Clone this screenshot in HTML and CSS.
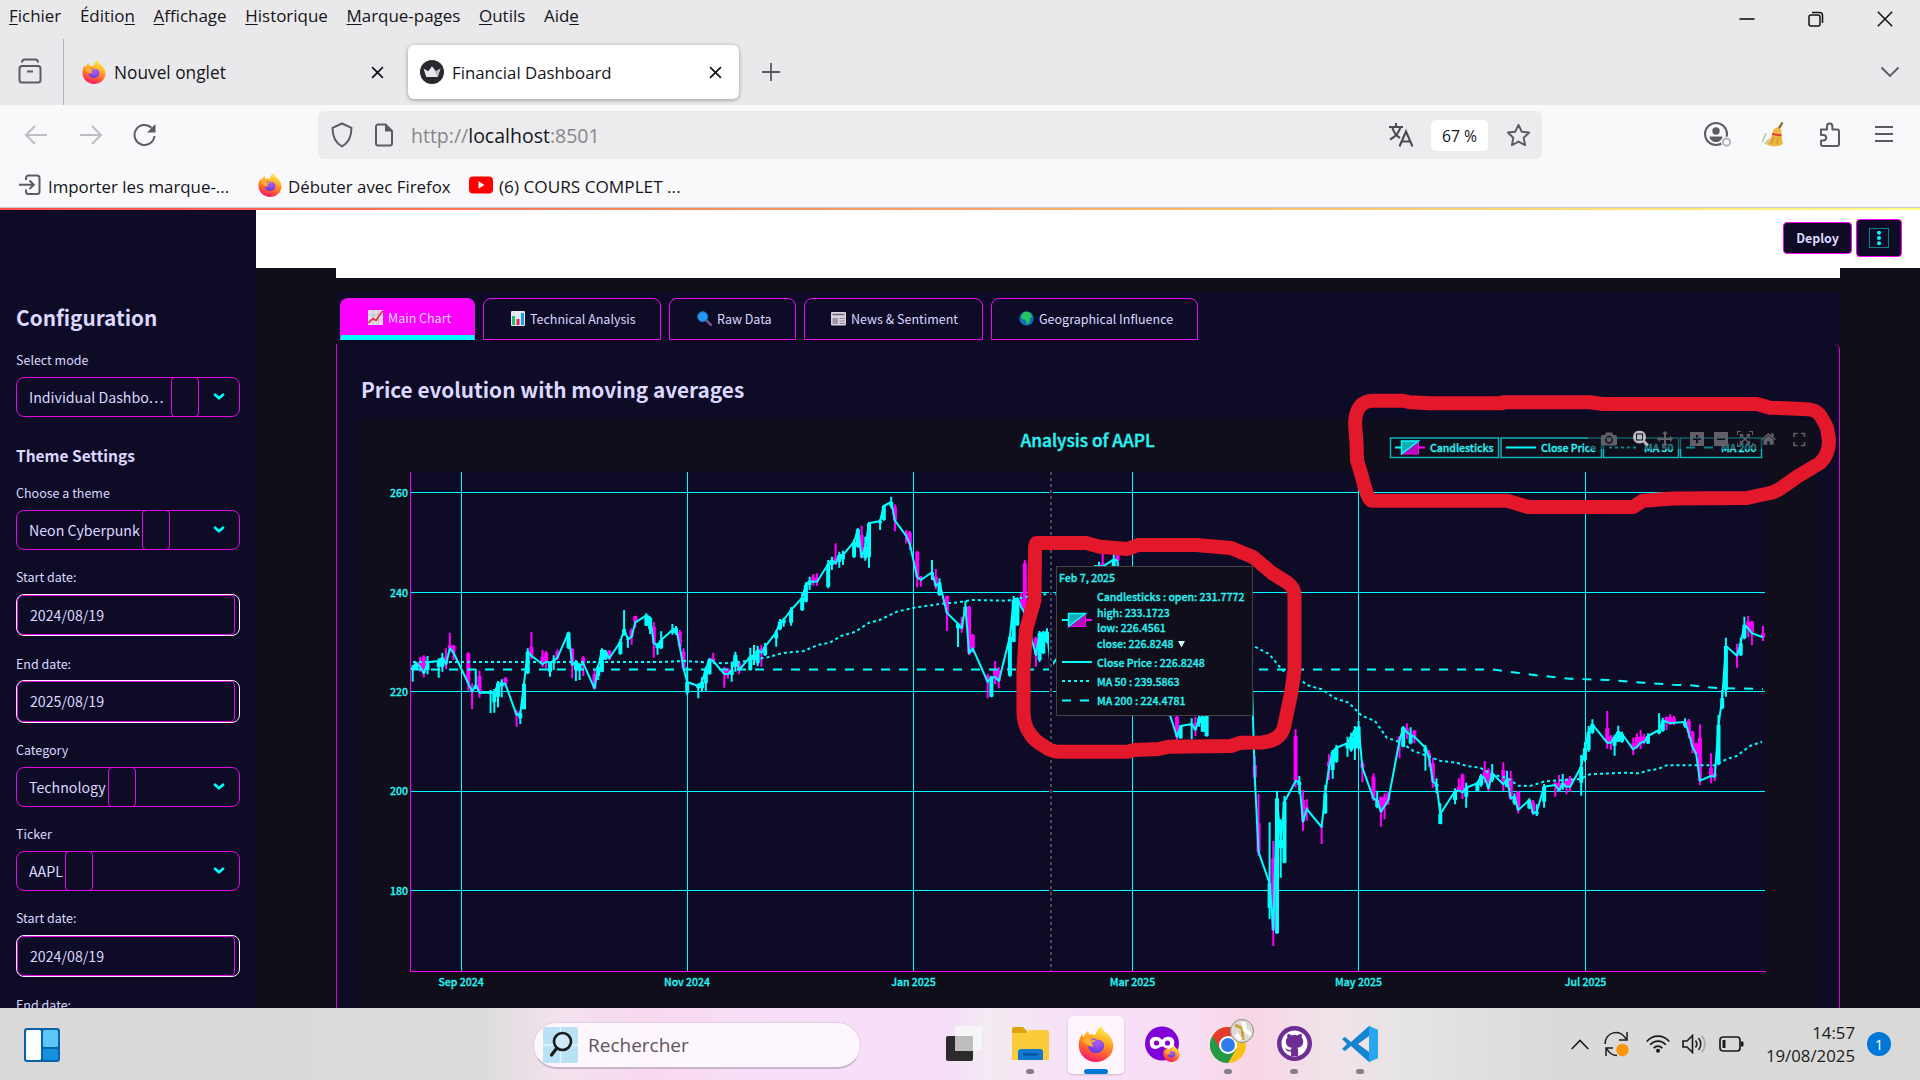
FILE: index.html
```html
<!DOCTYPE html>
<html lang="fr">
<head>
<meta charset="utf-8">
<title>Financial Dashboard</title>
<link rel="stylesheet" href="styles.css">
</head>
<body>
<svg class="defs" width="0" height="0">
  <defs>
    <linearGradient id="ffBody" x1=".7" y1="0" x2=".35" y2="1"><stop offset="0" stop-color="#fff44f"/><stop offset=".35" stop-color="#ffb42a"/><stop offset=".65" stop-color="#ff6a2c"/><stop offset="1" stop-color="#f5156c"/></linearGradient>
    <radialGradient id="ffCore" cx=".6" cy=".3" r=".8"><stop offset="0" stop-color="#b05cff"/><stop offset="1" stop-color="#5a35d8"/></radialGradient>
    <symbol id="firefox" viewBox="0 0 24 24">
      <path fill="url(#ffBody)" d="M15.6 0c.4 2.2 2 3.4 3.6 4.9 2.4 2.2 4.3 4.8 4.3 8.3C23.500 19.400 18.400 24 12 24S.5 19.200.5 12.800c0-3 .9-5.700 2.400-7.800.1 1.100.4 1.900.9 2.500C4.300 5.600 5.400 4 6.800 3.100c0 1 .3 1.900.8 2.600 1.600-.4 2.900-.2 4 .3C12.200 3.400 13.500 1.300 15.600 0z"/>
      <path fill="url(#ffCore)" d="M8.300 8.800c2.700-1.200 4 .6 5.600.5 2.500 0 4 2.500 3.300 5-.6 2.300-2.800 3.700-5.100 3.700-3.200 0-5.500-2.300-5.500-5.200 1.500 1.200 2.900 1.100 4.300.3-1.700-.5-2.400-1.500-2.600-4.300z"/>
      <path fill="#ffbd2f" d="M2.900 9.500c1.900-1.400 4-1.500 6-.6.8.4 2 .4 2.900.5-.3 1.200-1.800 1.500-2.300 2.100-.3.500 0 1.200.6 1.600-2.300 1.200-5-.3-7.200-3.600z" opacity=".75"/>
    </symbol>
    <symbol id="cross" viewBox="0 0 12 12"><path d="M1 1l10 10M11 1L1 11" fill="none" stroke="#15141a" stroke-width="1.600"/></symbol>
    <symbol id="caret" viewBox="0 0 12 8"><path d="M2 1.700l4 3.600 4-3.600" fill="none" stroke="#0ff" stroke-width="2.600" stroke-linecap="round" stroke-linejoin="round"/></symbol>
  </defs>
</svg>

<header class="browser">
  <div class="menubar">
    <nav class="menus"><span><u>F</u>ichier</span><span>Éditio<u>n</u></span><span><u>A</u>ffichage</span><span><u>H</u>istorique</span><span><u>M</u>arque-pages</span><span><u>O</u>utils</span><span>Aid<u>e</u></span></nav>
    <div class="winbuttons">
      <svg width="16" height="16" viewBox="0 0 16 16"><path d="M.5 8h15" stroke="#111" stroke-width="1.600"/></svg>
      <svg width="16" height="16" viewBox="0 0 16 16" fill="none" stroke="#111" stroke-width="1.500"><rect x="1" y="4" width="11" height="11" rx="2"/><path d="M4 1.500h7.500a3 3 0 0 1 3 3V12"/></svg>
      <svg width="16" height="16" viewBox="0 0 16 16"><path d="M.8.8l14.400 14.400M15.200.8L.8 15.200" stroke="#111" stroke-width="1.500"/></svg>
    </div>
  </div>
  <div class="tabstrip">
    <div class="library"><svg width="24" height="26" viewBox="0 0 24 26" fill="none" stroke="#5b5b66" stroke-width="2"><rect x="1.500" y="8" width="21" height="16.500" rx="2.500"/><path d="M4 4.500c0-2 1-3 3-3h10c2 0 3 1 3 3M9 13.500h6"/></svg></div>
    <div class="tab"><svg width="24" height="24"><use href="#firefox"/></svg><span>Nouvel onglet</span><svg class="close" width="13" height="13"><use href="#cross"/></svg></div>
    <div class="tab active"><svg width="24" height="24" viewBox="0 0 24 24"><circle cx="12" cy="12" r="12" fill="#262730"/><path d="M3.500 8.500l4.700 2.800L12 6.300l3.800 5 4.700-2.800-2.800 8.500H6.300z" fill="#e8e8ea"/><path d="M12 6.300l3.800 5 4.700-2.800-2.800 8.500z" fill="#b9babd"/></svg><span>Financial Dashboard</span><svg class="close" width="13" height="13"><use href="#cross"/></svg></div>
    <svg class="newtab" width="18" height="18" viewBox="0 0 18 18"><path d="M9 0v18M0 9h18" stroke="#5b5b66" stroke-width="1.800"/></svg>
    <svg class="alltabs" width="20" height="12" viewBox="0 0 20 12"><path d="M1.500 1.500L10 10l8.500-8.500" fill="none" stroke="#5b5b66" stroke-width="1.800"/></svg>
  </div>
  <div class="navbar">
    <div class="navbuttons">
      <svg width="24" height="24" viewBox="0 0 24 24" fill="none" stroke="#bdbdc2" stroke-width="2"><path d="M23 12H2M11 3l-9 9 9 9"/></svg>
      <svg width="24" height="24" viewBox="0 0 24 24" fill="none" stroke="#bdbdc2" stroke-width="2"><path d="M1 12h21M13 3l9 9-9 9"/></svg>
      <svg width="24" height="24" viewBox="0 0 24 24"><path d="M21.500 13A10 10 0 1 1 18.500 4.800" fill="none" stroke="#5b5b66" stroke-width="2"/><path d="M22.500 1v8.500H14z" fill="#5b5b66"/></svg>
    </div>
    <div class="urlbar">
      <svg width="24" height="26" viewBox="0 0 24 26" fill="none" stroke="#5b5b66" stroke-width="2"><path d="M12 1.500l9.500 4.300c0 8-2 14.500-9.500 18.700C4.500 20.300 2.500 13.800 2.500 5.800z" stroke-linejoin="round"/></svg>
      <svg class="doc" width="20" height="24" viewBox="0 0 20 24"><path d="M4 1.500h7.500L18 8v12.500a2 2 0 0 1-2 2H4a2 2 0 0 1-2-2v-17a2 2 0 0 1 2-2z" fill="none" stroke="#5b5b66" stroke-width="2"/><path d="M11 1l7.500 7.500H11z" fill="#5b5b66"/></svg>
      <span class="url">http://<b>localhost</b>:8501</span>
      <svg class="translate" width="24" height="24" viewBox="0 0 24 24" fill="none" stroke="#4b4b55" stroke-width="2.100"><path d="M0 4h14M7 0v4M11.500 4C10 10 6 14 1 16.500M3.500 5c1.500 5 4 8 7.500 10"/><path d="M10.500 23.500L17 8.500l6.500 15M12.800 18.500h8.500"/></svg>
      <span class="zoom">67 %</span>
      <svg class="star" width="25" height="25" viewBox="0 0 24 24"><path d="M12 1.800l3.100 6.500 7.100.9-5.200 4.900 1.300 7.100L12 17.800l-6.300 3.400L7 14.100 1.800 9.200l7.100-.9z" fill="none" stroke="#5b5b66" stroke-width="1.900" stroke-linejoin="round"/></svg>
    </div>
    <div class="toolbar">
      <svg width="28" height="26" viewBox="0 0 28 26"><circle cx="12" cy="12" r="11" fill="none" stroke="#5b5b66" stroke-width="2"/><circle cx="12" cy="9" r="3.700" fill="#5b5b66"/><path d="M5.500 14.500h13c-.5 3.600-3.200 5.500-6.500 5.500s-6-1.900-6.500-5.500z" fill="#5b5b66"/><circle cx="22.500" cy="20" r="5.500" fill="#f9f9fb"/><circle cx="22.500" cy="20" r="3.600" fill="none" stroke="#b5b5bb" stroke-width="2"/></svg>
      <svg width="24" height="26" viewBox="0 0 24 26"><path d="M21.500.5L17 8" stroke="#8b6420" stroke-width="2.200"/><path d="M5 11L1.500 20M8 17l-4 5" stroke="#b5cdb0" stroke-width="1.800"/><path d="M12.500 7.500l4-2.500 4 3c0 4 0 10 1.500 13-1 4-12 4.500-17 1 4-3 6-8 7.500-14.500z" fill="#ecb740"/><path d="M11 12l9.500 1.500" stroke="#e03a3a" stroke-width="2"/><path d="M10 22l3-7M16 22l1-6" stroke="#c98a20"/></svg>
      <svg width="24" height="26" viewBox="0 0 24 26"><path d="M3 7.500h6V4.200a2.700 2.700 0 0 1 5.400 0v3.300H19a2 2 0 0 1 2 2V22a2 2 0 0 1-2 2H5a2 2 0 0 1-2-2v-3.500h2.500a2.700 2.700 0 0 0 0-5.400H3z" fill="none" stroke="#5b5b66" stroke-width="2" stroke-linejoin="round"/></svg>
      <svg width="18" height="26" viewBox="0 0 18 26"><path d="M0 5h18M0 12h18M0 19h18" stroke="#5b5b66" stroke-width="1.900"/></svg>
    </div>
  </div>
  <div class="bookmarks">
    <svg width="22" height="22" viewBox="0 0 22 22" fill="none" stroke="#5b5b66" stroke-width="2"><path d="M7 6V4a2.500 2.500 0 0 1 2.500-2.500H18A2.500 2.500 0 0 1 20.500 4v13.500A2.500 2.500 0 0 1 18 20H9.500A2.500 2.500 0 0 1 7 17.500v-2M0 10.800h14M10.500 6.500l4.300 4.300-4.300 4.300"/></svg>
    <span class="bm-import">Importer les marque-...</span>
    <svg width="24" height="24"><use href="#firefox"/></svg>
    <span class="bm-start">Débuter avec Firefox</span>
    <svg width="24" height="18" viewBox="0 0 24 18"><rect width="24" height="17" y=".5" rx="4" fill="#f00"/><path d="M9.500 5.300v7.400l6-3.700z" fill="#fff"/></svg>
    <span>(6) COURS COMPLET ...</span>
  </div>
  <div class="progress"></div>
</header>

<div class="app">
  <aside class="sidebar">
    <h2>Configuration</h2>
    <div class="field"><label>Select mode</label><div class="select"><span>Individual Dashbo…</span><i class="gap-wide"></i><svg width="12" height="8"><use href="#caret"/></svg></div></div>
    <h3>Theme Settings</h3>
    <div class="field"><label>Choose a theme</label><div class="select"><span>Neon Cyberpunk</span><i></i><svg width="12" height="8"><use href="#caret"/></svg></div></div>
    <div class="field"><label>Start date:</label><div class="date"><span>2024/08/19</span></div></div>
    <div class="field"><label>End date:</label><div class="date"><span>2025/08/19</span></div></div>
    <div class="field"><label>Category</label><div class="select"><span>Technology</span><i></i><svg width="12" height="8"><use href="#caret"/></svg></div></div>
    <div class="field"><label>Ticker</label><div class="select"><span>AAPL</span><i></i><svg width="12" height="8"><use href="#caret"/></svg></div></div>
    <div class="field"><label>Start date:</label><div class="date"><span>2024/08/19</span></div></div>
    <div class="field"><label>End date:</label></div>
  </aside>

  <main class="main">
    <div class="topbar">
      <button class="deploy">Deploy</button>
      <button class="kebab"><svg width="20" height="20" viewBox="0 0 20 20"><rect x=".5" y=".5" width="19" height="19" fill="none" stroke="#0b8288"/><g fill="#0ff"><circle cx="10" cy="4.800" r="2"/><circle cx="10" cy="10" r="2"/><circle cx="10" cy="15.200" r="2"/></g></svg></button>
    </div>
    <div class="column">
      <div class="strip"></div>
      <div class="tabs">
        <div class="t selected"><svg width="15" height="15" viewBox="0 0 15 15"><rect width="15" height="15" rx="1" fill="#e3dfe6"/><path d="M0 5h15M0 10h15M5 0v15M10 0v15" stroke="#b9b3c2" stroke-width=".8"/><path d="M.5 13L5 8.500l3 2L14.500 1" fill="none" stroke="#e2293f" stroke-width="1.600"/></svg>Main Chart</div>
        <div class="t"><svg width="14" height="15" viewBox="0 0 14 15"><rect width="14" height="15" rx="1" fill="#e6e6ee"/><path d="M2.500 14V5" stroke="#1fbf6b" stroke-width="3"/><path d="M7 14V8" stroke="#e0245e" stroke-width="3"/><path d="M11.500 14V2" stroke="#1d9bf0" stroke-width="3"/></svg>Technical Analysis</div>
        <div class="t"><svg width="15" height="15" viewBox="0 0 15 15"><path d="M9 9l5 5" stroke="#6b4f8f" stroke-width="2.600" stroke-linecap="round"/><circle cx="5.700" cy="5.700" r="5" fill="#2196f3" stroke="#1976b8"/></svg>Raw Data</div>
        <div class="t"><svg width="15" height="15" viewBox="0 0 15 15"><rect y="1" width="15" height="13.500" rx="1" fill="#d9d3dd"/><path d="M1.500 3.500h12" stroke="#6c6376" stroke-width="1.500"/><path d="M8.500 7.500H14M8.500 10H14M8.500 12.500H14" stroke="#8e8599"/><rect x="1.500" y="7" width="5.500" height="6" fill="#9d94a9"/></svg>News &amp; Sentiment</div>
        <div class="t"><svg width="15" height="15" viewBox="0 0 15 15"><circle cx="7.500" cy="7.500" r="7.200" fill="#0f6fb5"/><path d="M4.500 1.500c3-1.500 6-.5 7.500 1.500l1 3-2 1-.5 4-2.500 2.500L6.500 9 3 8 2 5z" fill="#26c45e"/></svg>Geographical Influence</div>
      </div>
      <section class="panel">
        <h1>Price evolution with moving averages</h1>
        <svg class="chart" id="chart" width="1454" height="588" viewBox="361 420 1454 588">
          <rect x="361" y="420" width="1454" height="588" fill="#100e1a"/>
          <rect x="410.500" y="472" width="1354.500" height="499.500" fill="#0e0b26"/>
          <path class="grid" d="M410 492.500h1355M410 592.500h1355M410 691.500h1355M410 791.500h1355M410 890.500h1355M461.500 472v499M687.500 472v499M913.500 472v499M1132.500 472v499M1358.500 472v499M1585.500 472v499"/>
          <g id="candles"></g>
          <path id="close" class="line"/>
          <path class="line ma50" d="M413 662L662 662L685 661L715 663L725 663.300L737 662.500L767 657.500L783 653L804 651L817.500 645L829.600 642.700L841.700 635.700L855 632L869 622.700L879.500 620L897 611.700L914 607.700L945 603.300L955 602.700L972.500 600L1007 600.700L1031 596L1045 594.300L1070 594.300L1150 600L1255 646.700L1269 654L1283 670.700L1303 681.700L1306.700 685L1321.700 689.300L1335 698.300L1348.700 702.700L1361.700 715.700L1375 721L1386.700 737.700L1401.700 742.700L1413 750.700L1440 760.700L1456.700 762.700L1466.700 766L1480 767.700L1491.700 774.300L1508 778.300L1518 785.700L1530 786L1545 781.300L1580 779L1590 774.300L1623 772.700L1640 773.300L1646.700 770.700L1658 769L1666.700 765.300L1715 765.300L1726.700 759L1736.700 756L1750 746L1762 741.700"/>
          <path class="line ma200" d="M413 669.500L1493 669.500L1516.700 672.700L1540 675.700L1570 678.700L1608 680L1643 682.700L1673 684.700L1690 685.300L1716.700 688L1763 689"/>
          <path class="axis" d="M410.500 472v499.500h1355"/>
          <path d="M1051 472v499" stroke="#0e0b26" stroke-width="4"/>
          <path d="M1051 472v499" stroke="#4a4a50" stroke-width="2" stroke-dasharray="3 3"/>
          <g class="ticks end"><text x="408" y="497">260</text><text x="408" y="596.500">240</text><text x="408" y="696">220</text><text x="408" y="795">200</text><text x="408" y="895">180</text></g>
          <g class="ticks mid"><text x="461" y="986">Sep 2024</text><text x="687" y="986">Nov 2024</text><text x="913.500" y="986">Jan 2025</text><text x="1132.500" y="986">Mar 2025</text><text x="1358.500" y="986">May 2025</text><text x="1585.500" y="986">Jul 2025</text></g>
          <text class="title" x="1087.500" y="446.500">Analysis of AAPL</text>
          <g class="legend">
            <rect x="1390.500" y="438" width="108" height="19.500"/><rect x="1501" y="438" width="100.500" height="19.500"/><rect x="1603.500" y="438" width="75" height="19.500"/><rect x="1680.500" y="438" width="81" height="19.500"/>
            <g id="swatch"><path d="M1395 447.500h6" stroke="#0ff" stroke-width="2"/><path d="M1418 447.500h7" stroke="#f0f" stroke-width="2"/><path d="M1401.500 454v-13h17z" fill="#10adb3" stroke="#0ff" stroke-width="1.500"/><path d="M1418.500 441v13h-17z" fill="#b40db8" stroke="#f0f" stroke-width="1"/><path d="M1401.500 454l17-13" stroke="#0ff" stroke-width="1.500"/></g>
            <path d="M1506 447.500h30" stroke="#0ff" stroke-width="2"/><path d="M1609 447.500h27" stroke="#0ff" stroke-width="2" stroke-dasharray="3 3"/><path d="M1686 447.500h30" stroke="#0ff" stroke-width="2" stroke-dasharray="9 9"/>
            <g class="ticks"><text x="1430" y="452">Candlesticks</text><text x="1541" y="452">Close Price</text><text x="1644" y="452">MA 50</text><text x="1721" y="452">MA 200</text></g>
          </g>
          <rect x="1588" y="427" width="186" height="22" fill="#100e1a" opacity=".5"/>
          <g class="modebar">
            <svg x="1601" y="431" width="16" height="16" viewBox="0 0 1000 1000"><path transform="matrix(1 0 0 -1 0 850)" d="m500 450c-83 0-150-67-150-150 0-83 67-150 150-150 83 0 150 67 150 150 0 83-67 150-150 150z m400 150h-120c-16 0-34 13-39 29l-31 93c-6 15-23 28-40 28h-340c-16 0-34-13-39-28l-31-94c-6-15-23-28-40-28h-120c-55 0-100-45-100-100v-450c0-55 45-100 100-100h800c55 0 100 45 100 100v450c0 55-45 100-100 100z m-400-550c-138 0-250 112-250 250 0 138 112 250 250 250 138 0 250-112 250-250 0-138-112-250-250-250z"/></svg>
            <svg x="1633" y="430.500" width="16" height="16" viewBox="0 0 1000 1000" class="on"><path transform="matrix(1 0 0 -1 0 850)" d="m1000-25l-250 251c40 63 63 138 63 218 0 224-182 406-407 406-224 0-406-182-406-406s183-406 407-406c80 0 155 22 218 62l250-250 125 125z m-812 250l0 438 437 0 0-438-437 0z m62 375l313 0 0-312-313 0 0 312z"/></svg>
            <svg x="1657" y="431" width="16" height="16" viewBox="0 0 1000 1000"><path transform="matrix(1 0 0 -1 0 850)" d="m1000 350l-187 188 0-125-250 0 0 250 125 0-188 187-187-187 125 0 0-250-250 0 0 125-188-188 186-187 0 125 252 0 0-250-125 0 187-188 188 188-125 0 0 250 250 0 0-126 187 188z"/></svg>
            <svg x="1689" y="431" width="16" height="16" viewBox="0 0 875 1000"><path transform="matrix(1 0 0 -1 0 850)" d="m1 787l0-875 875 0 0 875-875 0z m687-500l-187 0 0-187-125 0 0 187-188 0 0 125 188 0 0 187 125 0 0-187 187 0 0-125z"/></svg>
            <svg x="1713" y="431" width="16" height="16" viewBox="0 0 875 1000"><path transform="matrix(1 0 0 -1 0 850)" d="m0 788l0-876 875 0 0 876-875 0z m688-500l-500 0 0 125 500 0 0-125z"/></svg>
            <svg x="1737" y="431" width="16" height="16" viewBox="0 0 1000 1000"><path transform="matrix(1 0 0 -1 0 850)" d="m250 850l-187 0-63 0 0-62 0-188 63 0 0 188 187 0 0 62z m688 0l-188 0 0-62 188 0 0-188 62 0 0 188 0 62-62 0z m-875-938l0 188-63 0 0-188 0-62 63 0 187 0 0 62-187 0z m875 188l0-188-188 0 0-62 188 0 62 0 0 62 0 188-62 0z m-125 188l-1 0-93-94-156 156 156 156 92-93 2 0 0 250-250 0 0-2 93-92-156-156-156 156 94 92 0 2-250 0 0-250 0 0 93 93 157-156-157-156-93 94 0 0 0-250 250 0 0 0-94 93 156 157 156-157-93-93 0 0 250 0 0 250z"/></svg>
            <svg x="1761" y="431" width="15" height="16" viewBox="0 0 928.600 1000"><path transform="matrix(1 0 0 -1 0 850)" d="m786 296v-267q0-15-11-26t-25-10h-214v214h-143v-214h-214q-15 0-25 10t-11 26v267q0 1 0 2t0 2l321 264 321-264q1-1 1-4z m124 39l-34-41q-5-5-12-6h-2q-7 0-12 3l-386 322-386-322q-7-4-13-4-7 2-12 7l-35 41q-4 5-3 13t6 12l401 334q18 15 42 15t43-15l136-114v109q0 8 5 13t13 5h107q8 0 13-5t5-13v-227l122-102q5-5 6-12t-4-13z"/></svg>
            <path class="full" d="M1794 437v-3.500h3.500M1801 433.500h3.500v3.500M1804.500 442v3.500h-3.500M1797.500 445.500h-3.500v-3.500"/>
          </g>
          <g class="tooltip">
            <rect x="1056.500" y="566.500" width="196" height="149"/>
            <use href="#swatch" x="-333" y="172.500"/>
            <path class="line" d="M1062 662h30"/><path class="line ma50" d="M1062 681h27"/><path class="line ma200" d="M1062 700.500h27"/>
            <g class="ticks"><text x="1059" y="582">Feb 7, 2025</text><text x="1097" y="601">Candlesticks : open: 231.7772</text><text x="1097" y="617">high: 233.1723</text><text x="1097" y="632">low: 226.4561</text><text x="1097" y="648">close: 226.8248</text><text x="1097" y="667">Close Price : 226.8248</text><text x="1097" y="686">MA 50 : 239.5863</text><text x="1097" y="705">MA 200 : 224.4781</text></g>
            <path d="M1178 641h7l-3.500 6.500z" fill="#cff"/>
          </g>
        </svg>
      </section>
    </div>
  </main>
</div>

<footer class="taskbar">
  <svg class="widgets" width="36" height="34" viewBox="0 0 36 34"><rect width="36" height="34" rx="3" fill="#0b62a8"/><rect x="2" y="2" width="15" height="30" rx="1.500" fill="#fdfdfd"/><rect x="19" y="2" width="15" height="17" rx="1.500" fill="#5cc6f5"/><rect x="19" y="21" width="15" height="11" rx="1.500" fill="#1690e0"/></svg>
  <div class="search">
    <svg width="35" height="36" viewBox="0 0 35 36"><rect width="35" height="36" rx="2" fill="#b9e2f6"/><path d="M17.500 0v36M0 18h35" stroke="#e6f6fd" stroke-width="1.500"/><circle cx="19.500" cy="14.500" r="8.500" fill="#cfe9f6" stroke="#1b1b1b" stroke-width="2.600"/><path d="M13.500 21.500L8.500 28" stroke="#1b1b1b" stroke-width="3.200" stroke-linecap="round"/></svg>
    <span>Rechercher</span>
  </div>
  <div class="apps">
    <div class="app-icon"><svg width="36" height="36" viewBox="0 0 36 36"><rect y="10" width="27" height="25" rx="2" fill="#2b2b2b"/><rect x="9" width="27" height="25" rx="2" fill="#f6f6f6"/><rect x="9" y="10" width="18" height="15" fill="#bdbdbd"/></svg></div>
    <div class="app-icon open"><svg width="37" height="34" viewBox="0 0 37 34"><path d="M0 2a2 2 0 0 1 2-2h9l4 4v6H0z" fill="#e0a10b"/><path d="M0 6h15l2-3h18a2 2 0 0 1 2 2v28H0z" fill="#fccb3a"/><path d="M6 33v-8a3 3 0 0 1 3-3h19a3 3 0 0 1 3 3v8z" fill="#1079cf"/><path d="M11 27.500h15" stroke="#0a4f93" stroke-width="2"/></svg></div>
    <div class="app-icon current"><svg width="36" height="36"><use href="#firefox"/></svg></div>
    <div class="app-icon"><svg width="36" height="36" viewBox="0 0 36 36"><circle cx="18" cy="17.500" r="17" fill="#8000d7"/><path d="M6 14c3-4.500 9-4 12 0 3-4 9-4.500 12 0 1 5-1 9-5 9-3.500 0-5-2.500-7-2.500S14.500 23 11 23c-4 0-6-4-5-9z" fill="#fff"/><circle cx="12.500" cy="17" r="2.600" fill="#8000d7"/><circle cx="23.500" cy="17" r="2.600" fill="#8000d7"/><svg x="19" y="19" width="17" height="17"><use href="#firefox"/></svg></svg></div>
    <div class="app-icon open"><svg width="46" height="44" viewBox="0 0 46 44"><circle cx="18" cy="26" r="18" fill="#fbc116"/><path d="M2.400 17A18 18 0 0 0 18 44l8-13.500L18 26z" fill="#229a48"/><path d="M18 17h15.600a18 18 0 0 0-31.200 0L10 30z" fill="#e33b2e"/><circle cx="18" cy="26" r="9" fill="#fff"/><circle cx="18" cy="26" r="7" fill="#2f7de9"/><circle cx="32" cy="12" r="11.500" fill="#dfdcd6" stroke="#8f8c86"/><path d="M25 6l7 3 1 12" stroke="#c9a43a" stroke-width="3" fill="none"/><path d="M33 3l2 8 6 5M26 15l5 6" stroke="#fff" stroke-width="4" fill="none"/></svg></div>
    <div class="app-icon open"><svg width="35" height="35" viewBox="0 0 35 35"><circle cx="17.500" cy="17.500" r="17.500" fill="#6e2d93"/><circle cx="17.500" cy="17.500" r="13" fill="#fff"/><path d="M14 30v-4.500c-3.800.6-4.500-1.500-6-3 2.200-.2 2.800 2 6 1.300.1-1 .5-1.500.9-2-4-.5-6-2.500-6-6.300 0-1.700.6-2.900 1.500-3.900-.3-1.300-.2-2.600.2-3.900 1.500 0 2.900.8 4 1.700 1.800-.5 4.100-.5 5.900 0 1.100-.9 2.500-1.700 4-1.700.4 1.300.5 2.600.2 3.900.9 1 1.500 2.200 1.500 3.900 0 3.800-2 5.800-6 6.300.6.600.9 1.500.9 2.700V30z" fill="#6e2d93"/></svg></div>
    <div class="app-icon open"><svg width="37" height="36" viewBox="0 0 37 36"><path d="M27 0l9 4v28l-9 4L9 20l-6 5-3-2 5-5-5-5 3-2 6 5zM27 10l-11 8 11 8z" fill="#1583cf"/><path d="M27 0l9 4v28l-9 4z" fill="#2ba7f2"/></svg></div>
  </div>
  <div class="tray">
    <svg width="18" height="11" viewBox="0 0 18 11"><path d="M.7 10L9 1.500 17.300 10" fill="none" stroke="#1b1b1b" stroke-width="1.600"/></svg>
    <svg class="sync" width="25" height="26" viewBox="0 0 25 26" fill="none" stroke="#1b1b1b" stroke-width="1.500"><path d="M1 13A11 11 0 0 1 22 8M23 1v8h-8M2 25v-8h7M3 18c2 4 5 6.500 10 6.500"/><circle cx="18.500" cy="19" r="6.200" fill="#fb960b" stroke="none"/></svg>
    <svg class="wifi" width="24" height="18" viewBox="0 0 24 18" fill="none" stroke="#1b1b1b" stroke-width="1.700"><path d="M.7 6.500C7-.6 17-.6 23.300 6.500M4.200 9.800c4.500-5 11.100-5 15.600 0M7.700 13.200c2.600-2.800 6-2.800 8.600 0"/><circle cx="12" cy="15.700" r="2" fill="#1b1b1b" stroke="none"/></svg>
    <svg class="speaker" width="25" height="20" viewBox="0 0 25 20" fill="none" stroke="#1b1b1b" stroke-width="1.600"><path d="M1 7h4l5.500-5.500v17L5 13H1zM13.500 6.500c1.500 2 1.500 5 0 7M16.500 4c3 3.500 3 8.500 0 12"/><path d="M19.500 1.500c4.500 5 4.500 12 0 17" stroke="#aaa"/></svg>
    <svg class="battery" width="25" height="16" viewBox="0 0 25 16"><rect x="1" y="1" width="20" height="14" rx="3" fill="none" stroke="#1b1b1b" stroke-width="1.700"/><rect x="3.500" y="4" width="3" height="8" fill="#1b1b1b"/><path d="M22 5.500h1.500a1 1 0 0 1 1 1v3a1 1 0 0 1-1 1H22z" fill="#1b1b1b"/></svg>
    <div class="clock"><span>14:57</span><span>19/08/2025</span></div>
    <span class="count">1</span>
  </div>
</footer>

<svg class="annotations" width="1920" height="1080" viewBox="0 0 1920 1080">
  <path d="M1373 400.700L1403 400.700L1410 402.300L1430 403.300L1502 403.300L1503 402.300L1590 402.300L1603 404L1757 404L1770 407.700L1803 409Q1815 409 1819 414T1827 428L1829 440Q1829 455 1820 463L1797 476.700L1783 486.700Q1776 492 1770 493L1747 498L1673 498.500L1643 500.700L1633 507L1528 507L1507 500.700L1372 500.700Q1368 501 1362 477L1357 460L1356.500 443L1355 423Q1356 401 1373 400.700z"/>
  <path d="M1037 543L1086 543L1100 546.700L1127.500 549L1138 545L1196 545L1231 548L1253 557L1272 573L1288 583Q1294.500 588 1294.500 596L1294.500 670L1291 694L1284 727Q1280 741 1262 742.500L1241 742.700L1231 746L1169 746.700L1158.500 749L1134 750L1127.500 751.700L1058.600 751.700Q1050 751 1045 746.700Q1034 741 1029 732Q1024 725 1023.500 713L1023.500 670L1026 630L1034.500 600L1035 550Q1035 543 1037 543z"/>
</svg>
<script src="chart.js"></script>
</body>
</html>
```
FILE: styles.css
```css
* { box-sizing: border-box; }
body { margin: 0; width: 1920px; height: 1080px; overflow: hidden; display: flex; flex-direction: column; background: #100e18; font-family: "Open Sans", "Noto Sans", sans-serif; color: #15141a; }
svg { display: block; flex: none; }
.defs { position: absolute; }
u { text-underline-offset: 2px; text-decoration-thickness: 1px; }

/* browser chrome */
.browser { flex: none; height: 210px; display: flex; flex-direction: column; background: #e9e9eb; }
.menubar { height: 39px; display: flex; justify-content: space-between; }
.menus { display: flex; gap: 18.7px; padding-left: 9px; font-size: 16.95px; line-height: 31px; }
.winbuttons { display: flex; gap: 53px; padding: 11px 27px 0 0; }
.tabstrip { height: 66px; display: flex; align-items: stretch; padding-right: 20px; }
.library { width: 64px; border-right: 1px solid #b4b4b8; padding: 19px 0 0 18px; }
.tab { width: 331px; height: 54px; margin: 6px 0 0; padding: 0 17px 0 18px; display: flex; align-items: center; font-size: 16.8px; border-radius: 6px; }
.tab span { margin-left: 8px; }
.tab .close { margin-left: auto; }
.tab:not(.active) { margin-right: 13px; padding-right: 11px; font-size: 17.3px; }
.tab.active { background: #fff; box-shadow: 0 1px 4px rgba(0, 0, 0, .35); padding-left: 12px; }
.newtab { margin: 24px 0 0 23px; }
.alltabs { margin: 27px 0 0 auto; }
.navbar { height: 60px; background: #f9f9fb; display: flex; align-items: center; padding: 0 27px 0 24px; }
.navbuttons { width: 294px; display: flex; gap: 30.5px; }
.urlbar { width: 1224px; height: 48px; border-radius: 6px; background: #ececee; display: flex; align-items: center; padding-left: 12px; }
.doc { margin-left: 20px; }
.url { margin: 1px 0 0 17px; font-size: 19.5px; color: #86868a; }
.url b { font-weight: 400; color: #15141a; }
.translate { margin-left: auto; }
.zoom { width: 57px; height: 31px; margin: 0 18px 0 18px; border-radius: 5px; background: #fff; font-size: 15.7px; line-height: 32px; text-align: center; }
.star { margin-right: 11px; }
.toolbar { margin-left: auto; display: flex; gap: 33px; }
.toolbar svg:first-child { margin-right: -4px; }
.bookmarks { height: 42px; background: #f9f9fb; display: flex; align-items: center; padding: 0 19px; font-size: 16.85px; }
.bookmarks svg { margin-top: -2px; }
.bookmarks span { margin-left: 7px; }
.bm-import { width: 183px; margin-right: 27px; white-space: nowrap; }
.bookmarks .bm-start { width: 163px; margin-left: 6px; margin-right: 18px; white-space: nowrap; }
.bookmarks .bm-start + svg + span { font-size: 17.2px; margin-left: 6px; }
.progress { height: 3px; border-top: 1px solid #c9ccd4; background: linear-gradient(90deg, #ff4b4b, #fffd80); }

/* application */
.app { flex: none; height: 798px; display: flex; overflow: hidden; font-family: "Noto Sans CJK SC", "Open Sans", sans-serif; color: #dcd8ff; }
.sidebar { width: 256px; background: #0e0b26; padding: 92px 16px 0; }
h1, h2, h3 { margin: 0; font-weight: 700; }
h2 { font-size: 20.8px; line-height: 30px; margin-bottom: 18px; }
h3 { font-size: 15.5px; line-height: 20px; margin: 28px 0 18px; }
.field { margin-bottom: 18px; }
h2 + .field { margin-bottom: 0; }
h2 + .field label { margin-bottom: 7px; }
label { display: block; font-size: 12.5px; line-height: 20px; margin-bottom: 6.5px; }
.field + .field label { margin-top: -.5px; }
.select { height: 40px; border: 1px solid #e20ae4; border-radius: 8px; display: flex; align-items: center; padding: 0 14px 0 12px; font-size: 14.2px; white-space: nowrap; }
.select i { width: 28px; height: 40px; margin-left: 2.5px; border: 1px solid #e20ae4; border-radius: 4px; }
.select i.gap-wide { margin-left: 7px; }
.select svg { margin-left: auto; }
.date { height: 42.5px; border: 1px solid #f4f0ff; border-radius: 8px; padding-right: 4px; }
.date span { display: block; height: 100%; border: 1px solid #e20ae4; border-radius: 7px 4px 4px 7px; padding-left: 12px; font-size: 14.2px; line-height: 39px; }
.main { flex: 1; display: flex; flex-direction: column; }
.topbar { flex: none; height: 58px; background: #fff; display: flex; justify-content: flex-end; align-items: center; gap: 4px; padding: 0 18px 2px 0; }
button { background: #0e0b26; border: 1.5px solid #f0f; border-radius: 4px; padding: 0; color: #dcd8ff; font: 700 12.4px "Noto Sans CJK SC", sans-serif; display: flex; align-items: center; justify-content: center; }
.deploy { width: 69px; height: 32px; }
.kebab { width: 46px; height: 38px; }
.column { width: 1504px; margin-left: 80px; flex: 1; display: flex; flex-direction: column; }
.strip { height: 24px; background: linear-gradient(#fff 10px, #100e18 10px); }
.tabs { background: #0e0b26; height: 52px; display: flex; gap: 8px; padding: 6px 0 4px 4px; }
.t { height: 42px; border: 1px solid #f00af2; border-radius: 8px 8px 0 0; display: flex; align-items: center; padding: 0 0 1px 27px; gap: 5px; font-size: 12.5px; font-weight: 400; white-space: nowrap; }
.t:nth-child(1) { width: 135px; padding-bottom: 0; }
.t:nth-child(2) { width: 178px; }
.t:nth-child(3) { width: 127px; }
.t:nth-child(4) { width: 179px; padding-left: 26px; }
.t:nth-child(5) { width: 207px; }
.t.selected { background: #f0f; border-bottom: 5px solid #0ff; }
.panel { flex: 1; background: #0e0b26; border: solid #d60ad8; border-width: 0 1px; border-radius: 0 6px 0 0; padding: 29px 0 0 24px; }
h1 { font-size: 20.8px; line-height: 32px; margin-bottom: 15px; }

/* chart */
.chart { font-family: "Noto Sans CJK SC", sans-serif; }
.grid { fill: none; stroke: #0ff; stroke-width: 1; shape-rendering: crispEdges; }
.axis { fill: none; stroke: #f0f; stroke-width: 1; shape-rendering: crispEdges; }
.line { fill: none; stroke: #0ff; stroke-width: 2; stroke-linejoin: round; }
.ma50 { stroke-dasharray: 3 3; }
.ma200 { stroke-dasharray: 9 9; }
.up { stroke: #0ff; fill: #0ff; }
.down { stroke: #f0f; fill: #f0f; }
.ticks { font-size: 10.5px; font-weight: 500; fill: #2af2f4; stroke: #2af2f4; stroke-width: .3; }
.end { text-anchor: end; }
.mid { text-anchor: middle; }
.title { font-size: 17.3px; font-weight: 500; fill: #2af2f4; stroke: #2af2f4; stroke-width: .4; text-anchor: middle; }
.legend rect { fill: #100e1a; stroke: #10b2b7; stroke-width: 1.5; }
.modebar { fill: #615f68; }
.modebar .on { fill: #bbbac0; }
.full { fill: none; stroke: #615f68; stroke-width: 1.6; }
.tooltip rect { fill: #100e1a; stroke: #444; }

/* taskbar */
.taskbar { flex: none; height: 72px; position: relative; display: flex; background: linear-gradient(90deg, #d9d9d9 0, #dcdbdc 480px, #f3e2ee 560px, #f7d8ef 650px, #f8dff8 760px, #f6dcf9 940px, #f3eaf2 990px, #f7dff7 1080px, #f8dff5 1180px, #f8d6e6 1250px, #f1e3ea 1330px, #e6e4e5 1400px, #dadada 1560px, #d9d9d9 100%); }
.widgets { margin: 20px 0 0 24px; }
.search { margin: 14px 0 0 473px; width: 328px; height: 47px; border-radius: 24px; border: 1px solid #e2cfe2; border-bottom: 2px solid #c9b6c9; background: rgba(255, 250, 255, .85); display: flex; align-items: center; padding-left: 9px; font-size: 19px; color: #5a555a; gap: 10px; }
.apps { display: flex; margin: 8px 0 0 75px; gap: 10px; }
.app-icon { width: 56px; height: 58px; display: flex; align-items: center; justify-content: center; position: relative; padding-bottom: 3px; }
.app-icon:nth-child(5) { padding: 0 0 9px 10px; }
.current { background: rgba(255, 250, 255, .8); border-radius: 5px; box-shadow: 0 1px 2px rgba(120, 80, 120, .3); }
.open::after, .current::after { content: ""; position: absolute; left: 24px; bottom: 0; width: 8px; height: 5px; border-radius: 3px; background: #868086; }
.current::after { left: 16px; width: 24px; background: #0078d7; }
.tray { margin-left: auto; display: flex; align-items: center; padding-right: 29px; }
.sync { margin-left: 15px; }
.wifi { margin-left: 17px; }
.speaker { margin-left: 12px; }
.battery { margin-left: 12px; }
.clock { width: 111px; display: flex; flex-direction: column; text-align: right; font-size: 16.8px; line-height: 23px; color: #1b1b1b; }
.count { width: 24px; height: 24px; margin-left: 12px; border-radius: 50%; background: #0078d7; color: #fff; font-size: 15px; line-height: 24px; text-align: center; }

.annotations { position: absolute; left: 0; top: 0; pointer-events: none; }
.annotations path { fill: none; stroke: #e4182b; stroke-width: 14; stroke-linejoin: round; }
```
FILE: chart.js
```js
// Each row: day offset from 19 Aug 2024, high, open, close, low.
// Levels are in thirds of a pixel below the segment's base line.
const segments = [
  { base: 470, rows: [
    [0,585,600,592,635],[1,575,600,580,600],[2,560,575,590,605],[3,556,560,610,622],[4,558,600,577,613],
    [7,565,590,573,623],[8,549,590,563,605],[9,535,560,583,598],[10,488,525,535,545],[11,525,527,548,570],
    [15,547,550,640,662],[16,640,655,665,717],[17,598,655,645,658],[18,602,618,668,683],
    [21,660,670,668,729],[22,657,697,670,728],[23,633,680,640,712],[24,628,650,640,682],[25,621,625,642,652],
    [28,720,725,735,770],[29,723,745,730,762],[30,640,718,641,718],[31,535,610,545,612],[32,486,530,557,567],
    [35,540,560,583,592],[36,543,548,575,595],[37,573,605,578,620],[38,556,580,572,600],[39,538,545,563,570],
    [42,485,533,488,537],[43,535,537,585,625],[44,570,600,575,633],[45,580,602,588,630],[46,558,563,580,618],
    [49,600,612,655,658],[50,585,618,590,630],[51,535,605,540,607],[52,540,568,545,570],[53,540,542,565,570],
    [56,507,552,515,554],[57,420,493,478,497],[58,500,510,508,533],[59,475,480,500,524],[60,437,438,457,473],
    [63,430,467,436,468],[64,440,478,443,492],[65,456,470,520,563],[66,520,535,525,554],[67,484,535,510,537],
    [70,462,488,480,494],[71,468,490,475,495],[72,480,487,530,537],[73,535,545,595,600],[74,590,668,636,675],
    [77,640,655,648,685],[78,622,655,635,663],[79,590,640,598,663],[80,564,612,568,614],[81,548,565,573,577],
    [84,590,595,612,653],[85,594,598,612,626],[86,575,615,600,635],[87,545,590,555,605],[88,575,580,600,613],
    [91,533,600,560,602],[92,525,570,555,585],[93,528,580,540,588],[94,525,535,548,590],[95,518,555,530,558],
    [98,480,505,487,530],[99,447,478,455,481],[100,443,460,450,470],[102,412,458,420,467],
    [105,370,420,383,423],[106,337,395,345,397],[107,320,345,333,360],[108,312,320,335,347],[109,310,325,335,347],
    [112,270,350,283,355],[113,260,285,270,300],[114,220,262,280,285],[115,245,275,255,293],[116,242,268,255,285],
    [119,208,260,215,264],[120,175,230,178,233],[121,167,195,262,263],[122,200,265,230,272],[123,157,262,160,293],
    [126,148,160,153,180],[127,105,150,108,152],[129,80,108,96,115],[130,103,110,152,184],
    [133,180,188,197,220],[134,183,188,222,240],[136,243,245,322,352],[137,318,320,330,350],
    [140,270,315,307,330],[141,297,320,348,357],[142,325,375,338,377],[144,377,378,428,483],
    [147,458,475,461,531],[148,440,460,475,488],[149,392,430,410,433],[150,408,410,550,555],[151,492,495,535,549],
    [155,612,618,636,685],[156,617,680,622,682],[157,573,600,622,642],[158,592,600,633,655],
    [161,495,617,500,620],[162,378,515,390,517],[163,385,465,385,468],[164,370,390,410,415],[165,270,280,430,450],
    [168,500,505,555,590],[169,483,570,490,576],[170,483,550,490,552],[171,475,515,485,520],[172,492,517,590,600],
    [175,530,590,545,595],[176,470,545,490,550],[177,420,490,430,500],[178,340,430,350,440],[179,310,350,320,355],
    [183,300,320,310,330],[184,285,300,290,310],[185,275,295,287,295],[186,250,280,290,295],
    [189,250,290,268,290],[190,250,255,272,350],[191,300,310,400,410],[192,400,410,470,480],[193,420,480,430,490],
    [196,430,440,500,520],[197,500,510,540,560],[198,500,540,520,560],[199,520,530,540,560],[200,500,540,510,560],
    [203,560,570,650,690],[204,650,660,730,740],[206,735,740,800,812],[207,765,805,768,806],
    [210,745,768,762,808],[211,740,760,780,798],[212,730,760,745,770],[213,720,785,740,785],[214,690,798,700,800],
    [217,560,690,580,695],[218,540,580,550,590],[219,550,560,590,600],[220,550,590,560,600],[221,560,570,620,630],
    [224,580,640,590,650],[225,570,590,580,600],[226,560,580,562,610]] },
  { base: 620, rows: [
    [227,408,435,472,500],[228,522,610,695,708],[231,607,863,790,897],[232,663,715,930,978],[233,512,940,535,941],
    [234,598,685,660,773],[235,528,728,545,730],[238,328,348,483,502],[239,468,495,485,522],[240,510,540,605,632],
    [241,538,560,567,602],[245,617,619,621,672],[246,495,580,520,582],[247,403,425,440,480],[248,390,450,395,476],
    [249,375,425,383,428],[252,350,385,370,410],[253,338,390,350,395],[254,318,385,330,420],[255,303,385,320,387],
    [256,425,430,443,487],[259,460,470,536,543],[260,512,560,540,565],[261,530,532,575,620],[262,520,530,558,598],
    [263,513,520,540,555],[266,348,350,362,415],[267,318,380,322,382],[268,310,325,337,357],[269,322,370,345,373],
    [270,330,332,350,370],[273,375,395,383,452],[274,390,400,412,440],[275,413,430,485,503],[276,475,500,492,520],
    [277,550,612,582,613],[281,505,540,513,553],[282,475,500,512,517],[283,460,465,517,537],[284,488,530,503,563],
    [287,485,512,490,515],[288,462,495,467,500],[289,423,450,475,488],[290,445,450,505,513],[291,432,480,460,487],
    [294,427,450,493,513],[295,452,500,478,502],[296,452,475,535,540],[297,520,550,530,555],[298,512,515,570,580],
    [301,535,565,540,567],[302,540,545,580,585],[303,553,583,575,588],[305,492,545,500,563],[308,483,490,495,530],
    [309,465,490,512,516],[310,462,503,490,510],[311,475,480,500,523],[312,468,475,500,515]] },
  { base: 600, rows: [
    [315,465,548,500,587],[316,425,480,445,485],[317,378,450,395,455],[318,358,398,373,401],[322,333,385,428,446],
    [323,405,410,428,450],[324,405,437,410,467],[325,377,425,395,426],[326,395,425,402,428],[329,413,430,448,465],
    [330,400,410,440,446],[331,390,410,428,447],[332,402,410,425,433],[333,400,430,408,432],[336,340,400,390,403],
    [337,353,392,362,395],[338,350,352,365,390],[339,342,350,370,375],[340,348,355,368,376],[343,355,378,366,383],
    [344,357,362,400,415],[345,393,395,440,460],[346,428,430,462,465],[347,373,413,542,555],[350,460,505,528,550],
    [351,495,520,530,543],[352,345,493,375,496],[353,270,325,295,328],[354,113,270,138,290],[357,132,165,167,203],
    [358,113,165,130,168],[359,50,115,75,118],[360,48,65,85,112],[361,62,65,100,135],[364,78,100,112,123]] },
];

const dayX = d => 412.7 + d * 3.7096;
const wicks = { up: '', down: '' };
const bodies = { up: '', down: '' };
const closes = [];
for (const { base, rows } of segments) {
  for (const [day, ...levels] of rows) {
    const [high, open, close, low] = levels.map(v => base + v / 3);
    const x = dayX(day);
    const dir = close < open ? 'up' : 'down';
    wicks[dir] += `M${x.toFixed(1)} ${high.toFixed(1)}V${low.toFixed(1)}`;
    bodies[dir] += `M${x.toFixed(1)} ${open.toFixed(1)}V${close.toFixed(1)}`;
    closes.push(`${x.toFixed(1)} ${close.toFixed(1)}`);
  }
}
document.getElementById('candles').innerHTML = ['up', 'down'].map(dir =>
  `<path class="${dir}" stroke-width="2" d="${wicks[dir]}"/><path class="${dir}" stroke-width="4" d="${bodies[dir]}"/>`).join('');
document.getElementById('close').setAttribute('d', 'M' + closes.join('L'));
```
